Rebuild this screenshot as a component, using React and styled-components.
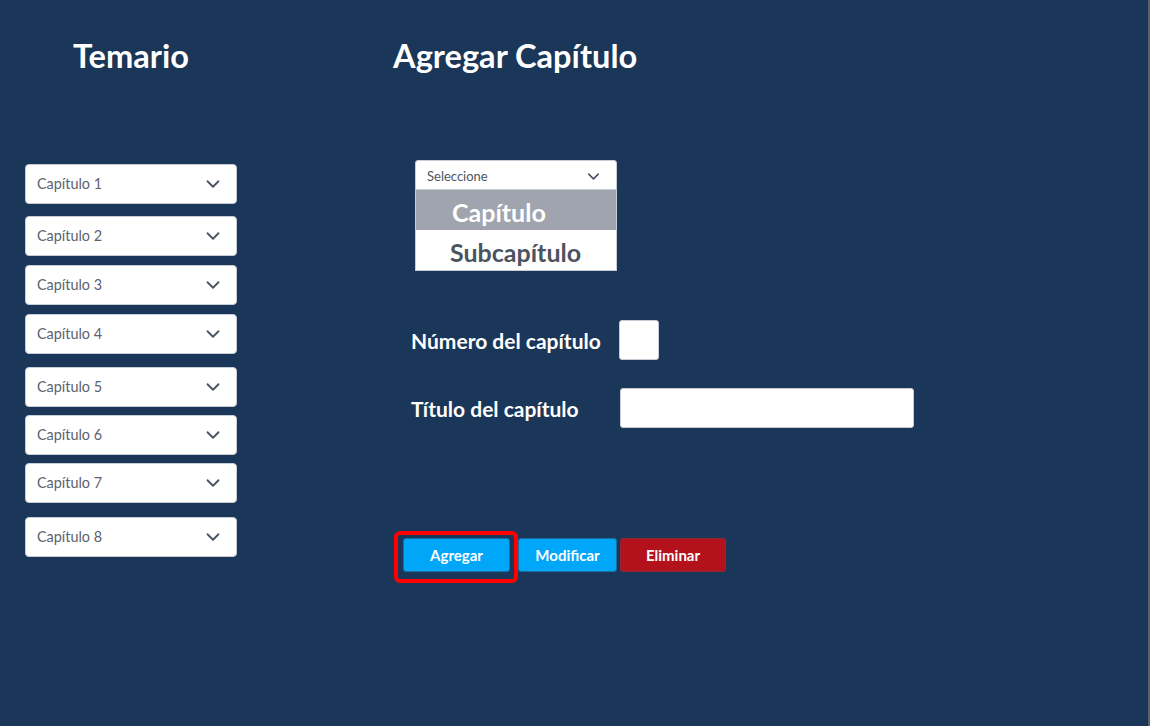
import React from "react";
import styled, { createGlobalStyle } from "styled-components";
import { ChevronDown } from "lucide-react";

const GlobalStyle = createGlobalStyle`
  html, body {
    margin: 0;
    padding: 0;
    background: #1a3658;
  }
  * {
    box-sizing: border-box;
  }
`;

const Page = styled.div`
  display: flex;
  width: 1150px;
  height: 726px;
  background: #1a3658;
  border-right: 2px solid #56616f;
  font-family: Lato, "Open Sans", sans-serif;
  overflow: hidden;
`;

const Sidebar = styled.aside`
  width: 212px;
  margin-left: 25px;
  display: flex;
  flex-direction: column;
`;

const Main = styled.main`
  margin-left: 156px;
  display: flex;
  flex-direction: column;
  flex: 1;
`;

const Heading = styled.h1`
  margin: 0;
  padding-top: 36px;
  font-size: 32.6px;
  line-height: 40px;
  font-weight: 700;
  color: #ffffff;
  text-align: ${(props) => (props.$center ? "center" : "left")};
`;

const ChapterList = styled.div`
  display: flex;
  flex-direction: column;
  margin-top: 88px;
`;

const ChapterItem = styled.div`
  display: flex;
  align-items: center;
  justify-content: space-between;
  height: 40px;
  padding: 0 12px 1px 11px;
  margin-top: ${(props) => props.$gap}px;
  background: #ffffff;
  border: 1px solid #c9ced6;
  border-radius: 4px;
  color: #5b6370;
  font-size: 14.4px;
`;

const SelectBox = styled.div`
  width: 202px;
  margin-left: 22px;
  margin-top: 84px;
`;

const SelectHead = styled.div`
  display: flex;
  align-items: center;
  justify-content: space-between;
  height: 30px;
  padding: 2px 13px 0 11px;
  background: #ffffff;
  border: 1px solid #c9ced6;
  border-radius: 3px 3px 0 0;
  color: #4d5562;
  font-size: 13px;
`;

const OptionList = styled.div`
  border: 1px solid #c9ced6;
  border-top: none;
  background: #ffffff;
`;

const Option = styled.div`
  height: 40px;
  display: flex;
  align-items: center;
  padding-top: 3px;
  padding-left: ${(props) => (props.$active ? 36 : 34)}px;
  font-size: 25px;
  font-weight: 700;
  background: ${(props) => (props.$active ? "#a0a4ae" : "#ffffff")};
  color: ${(props) => (props.$active ? "#ffffff" : "#4b5361")};
`;

const Form = styled.div`
  display: flex;
  flex-direction: column;
  gap: 28px;
  margin-top: 49px;
  margin-left: 18px;
`;

const FormRow = styled.div`
  display: grid;
  grid-template-columns: 208px auto;
  align-items: center;
`;

const Label = styled.label`
  color: #ffffff;
  font-size: 21px;
  font-weight: 700;
`;

const Input = styled.div`
  width: ${(props) => props.$width}px;
  height: 40px;
  margin-left: ${(props) => props.$offset || 0}px;
  background: #ffffff;
  border: 1px solid #c9ced6;
  border-radius: 3px;
`;

const ButtonRow = styled.div`
  display: flex;
  align-items: center;
  margin-top: 110px;
  margin-left: 10px;
`;

const Button = styled.button`
  position: relative;
  height: 34px;
  width: ${(props) => props.$width}px;
  margin-right: ${(props) => props.$space || 0}px;
  padding: 0;
  font-family: Lato, "Open Sans", sans-serif;
  font-size: 15px;
  font-weight: 700;
  color: #ffffff;
  background: ${(props) => (props.$danger ? "#b3121c" : "#00a6f8")};
  border: 1px solid ${(props) => (props.$danger ? "#8e2a36" : "#1e6f9e")};
  border-radius: 3px;
  cursor: pointer;
`;

const FocusRing = styled.span`
  position: absolute;
  left: -10px;
  top: -8px;
  right: -9px;
  bottom: -12px;
  border: 4px solid #ff0000;
  border-radius: 6px;
  pointer-events: none;
`;

const chapters = [
  { name: "Capítulo 1", gap: 0 },
  { name: "Capítulo 2", gap: 12 },
  { name: "Capítulo 3", gap: 9 },
  { name: "Capítulo 4", gap: 9 },
  { name: "Capítulo 5", gap: 13 },
  { name: "Capítulo 6", gap: 8 },
  { name: "Capítulo 7", gap: 8 },
  { name: "Capítulo 8", gap: 14 },
];

export default function App() {
  return (
    <>
      <GlobalStyle />
      <Page>
        <Sidebar>
          <Heading $center>Temario</Heading>
          <ChapterList>
            {chapters.map((chapter) => (
              <ChapterItem key={chapter.name} $gap={chapter.gap}>
                <span>{chapter.name}</span>
                <ChevronDown size={22} strokeWidth={2} color="#4a5361" />
              </ChapterItem>
            ))}
          </ChapterList>
        </Sidebar>
        <Main>
          <Heading>Agregar Capítulo</Heading>
          <SelectBox>
            <SelectHead>
              <span>Seleccione</span>
              <ChevronDown size={19} strokeWidth={2} color="#4a5361" />
            </SelectHead>
            <OptionList>
              <Option $active>Capítulo</Option>
              <Option>Subcapítulo</Option>
            </OptionList>
          </SelectBox>
          <Form>
            <FormRow>
              <Label>Número del capítulo</Label>
              <Input $width={40} />
            </FormRow>
            <FormRow>
              <Label>Título del capítulo</Label>
              <Input $width={294} $offset={1} />
            </FormRow>
          </Form>
          <ButtonRow>
            <Button $width={107} $space={8}>
              Agregar
              <FocusRing />
            </Button>
            <Button $width={99} $space={3}>Modificar</Button>
            <Button $width={106} $danger>Eliminar</Button>
          </ButtonRow>
        </Main>
      </Page>
    </>
  );
}
